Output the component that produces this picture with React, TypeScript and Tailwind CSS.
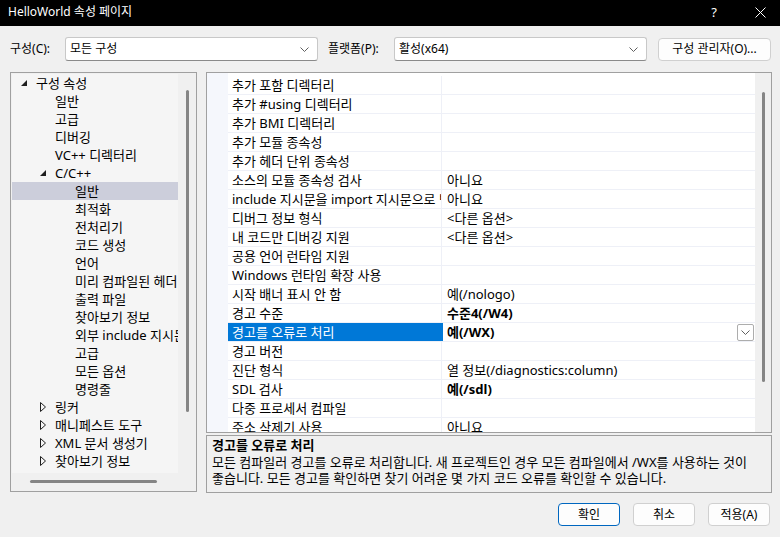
import React from 'react';

type TreeItem = { label: string; level: 0 | 1 | 2; expand?: 'open' | 'closed'; selected?: boolean };

const tree: TreeItem[] = [
  { label: '구성 속성', level: 0, expand: 'open' },
  { label: '일반', level: 1 },
  { label: '고급', level: 1 },
  { label: '디버깅', level: 1 },
  { label: 'VC++ 디렉터리', level: 1 },
  { label: 'C/C++', level: 1, expand: 'open' },
  { label: '일반', level: 2, selected: true },
  { label: '최적화', level: 2 },
  { label: '전처리기', level: 2 },
  { label: '코드 생성', level: 2 },
  { label: '언어', level: 2 },
  { label: '미리 컴파일된 헤더', level: 2 },
  { label: '출력 파일', level: 2 },
  { label: '찾아보기 정보', level: 2 },
  { label: '외부 include 지시문', level: 2 },
  { label: '고급', level: 2 },
  { label: '모든 옵션', level: 2 },
  { label: '명령줄', level: 2 },
  { label: '링커', level: 1, expand: 'closed' },
  { label: '매니페스트 도구', level: 1, expand: 'closed' },
  { label: 'XML 문서 생성기', level: 1, expand: 'closed' },
  { label: '찾아보기 정보', level: 1, expand: 'closed' },
];

type Prop = { name: string; value?: string; bold?: boolean; selected?: boolean };

const props: Prop[] = [
  { name: '추가 포함 디렉터리' },
  { name: '추가 #using 디렉터리' },
  { name: '추가 BMI 디렉터리' },
  { name: '추가 모듈 종속성' },
  { name: '추가 헤더 단위 종속성' },
  { name: '소스의 모듈 종속성 검사', value: '아니요' },
  { name: 'include 지시문을 import 지시문으로 변환', value: '아니요' },
  { name: '디버그 정보 형식', value: '<다른 옵션>' },
  { name: '내 코드만 디버깅 지원', value: '<다른 옵션>' },
  { name: '공용 언어 런타임 지원' },
  { name: 'Windows 런타임 확장 사용' },
  { name: '시작 배너 표시 안 함', value: '예(/nologo)' },
  { name: '경고 수준', value: '수준4(/W4)', bold: true },
  { name: '경고를 오류로 처리', value: '예(/WX)', bold: true, selected: true },
  { name: '경고 버전' },
  { name: '진단 형식', value: '열 정보(/diagnostics:column)' },
  { name: 'SDL 검사', value: '예(/sdl)', bold: true },
  { name: '다중 프로세서 컴파일' },
  { name: '주소 삭제기 사용', value: '아니요' },
];

const levelPad = ['pl-[9px]', 'pl-[28px]', 'pl-[48px]'];

function Chevron() {
  return (
    <svg width="9" height="5" viewBox="0 0 9 5" fill="none">
      <polyline points="0.5,0.5 4.5,4.5 8.5,0.5" stroke="#5f5f5f" strokeWidth="1" />
    </svg>
  );
}

function Arrow({ kind }: { kind?: 'open' | 'closed' }) {
  if (kind === 'open')
    return (
      <svg width="6" height="6" viewBox="0 0 6 6">
        <polygon points="6,0 6,6 0,6" fill="#1e1e1e" />
      </svg>
    );
  if (kind === 'closed')
    return (
      <svg width="6" height="10" viewBox="0 0 6 10">
        <polygon points="0.5,0.5 5.5,5 0.5,9.5" fill="none" stroke="#1e1e1e" strokeWidth="1" />
      </svg>
    );
  return null;
}

function Combo({ text, width }: { text: string; width: string }) {
  return (
    <div className={`${width} h-[24px] bg-white border border-[#c8c8c8] border-b-[#8a8a8a] rounded-[3px] flex items-center pl-[4px] pr-[8px]`}>
      <span className="flex-1">{text}</span>
      <Chevron />
    </div>
  );
}

export default function App() {
  return (
    <div className="w-[780px] h-[537px] bg-[#f0f0f0] flex flex-col overflow-hidden text-[12px] leading-none text-black font-['Noto_Sans','Noto_Sans_CJK_KR',sans-serif]">
      {/* title bar */}
      <div className="h-[26px] bg-black text-white flex items-center pl-[8px] pb-[2px] shrink-0">
        <span className="flex-1">HelloWorld 속성 페이지</span>
        <span className="w-[8px] text-center text-[13px] mr-[37px]">?</span>
        <svg width="11" height="11" viewBox="0 0 11 11" className="mr-[14px]">
          <path d="M0.5 0.5 L10.5 10.5 M10.5 0.5 L0.5 10.5" stroke="#fff" strokeWidth="1" />
        </svg>
      </div>

      {/* toolbar */}
      <div className="h-[46px] flex items-center pl-[10px] shrink-0">
        <span className="w-[55px]">구성(C):</span>
        <Combo text="모든 구성" width="w-[253px]" />
        <span className="ml-[10px] w-[66px]">플랫폼(P):</span>
        <Combo text="활성(x64)" width="w-[253px]" />
        <div className="ml-[11px] w-[113px] h-[23px] bg-[#fdfdfd] border border-[#d0d0d0] rounded-[4px] flex items-center justify-center">
          구성 관리자(O)...
        </div>
      </div>

      {/* main */}
      <div className="flex pl-[10px] text-[13px]">
        {/* tree */}
        <div className="w-[187px] h-[420px] border border-[#a0a0a0] p-px flex flex-col">
          <div className="flex flex-1">
            <div className="w-[166px] h-[399px] bg-[#f5f5f5] overflow-hidden">
              {tree.map((t, i) => (
                <div
                  key={i}
                  className={`h-[18px] flex items-center whitespace-nowrap ${levelPad[t.level]} ${t.selected ? 'bg-[#cccedb]' : ''}`}
                >
                  <div className="w-[15px] shrink-0 flex items-center">
                    <Arrow kind={t.expand} />
                  </div>
                  <span>{t.label}</span>
                </div>
              ))}
            </div>
            <div className="flex-1 flex justify-center pt-[16px]">
              <div className="w-[3px] h-[322px] bg-[#858585] rounded-full ml-px" />
            </div>
          </div>
          <div className="h-[17px] flex items-center pl-[18px]">
            <div className="w-[127px] h-[3px] bg-[#858585] rounded-full" />
          </div>
        </div>

        {/* right column */}
        <div className="ml-[9px] w-[566px] flex flex-col">
          {/* property grid */}
          <div className="h-[361px] border border-[#a0a0a0] bg-white flex overflow-hidden">
            <div className="w-[21px] bg-[#f5f7fc] shrink-0" />
            <div className="w-[527px] pt-[3px] shrink-0">
              {props.map((p, i) => (
                <div key={i} className="h-[19px] flex border-b border-[#eef0f7]">
                  <div
                    className={`w-[213px] shrink-0 pl-[4px] flex items-center whitespace-nowrap overflow-hidden ${p.selected ? 'bg-[#0078d7] text-white' : ''}`}
                  >
                    {p.name}
                  </div>
                  <div className="w-px bg-[#eef0f7] shrink-0" />
                  <div className="flex-1 flex items-center relative pl-[5px]">
                    {p.selected && <div className="absolute left-[-1px] top-0 bottom-0 w-[2px] bg-[#0078d7]" />}
                    <span className={`flex-1 whitespace-nowrap ${p.bold ? 'font-bold' : ''}`}>{p.value ?? ''}</span>
                    {p.selected && (
                      <div className="w-[17px] h-[17px] mr-[1px] bg-white border border-[#adadad] rounded-[2px] flex items-center justify-center">
                        <Chevron />
                      </div>
                    )}
                  </div>
                </div>
              ))}
            </div>
            <div className="flex-1 bg-[#f0f0f0] flex justify-center pt-[19px]">
              <div className="w-[3px] h-[290px] bg-[#858585] rounded-full" />
            </div>
          </div>

          {/* description */}
          <div className="mt-[2px] h-[58px] border border-[#a0a0a0] pl-[5px] pt-px whitespace-nowrap overflow-hidden">
            <div className="h-[17px] leading-[17px] font-bold">경고를 오류로 처리</div>
            <div className="leading-[16px]">
              모든 컴파일러 경고를 오류로 처리합니다. 새 프로젝트인 경우 모든 컴파일에서 /WX를 사용하는 것이
              <br />
              좋습니다. 모든 경고를 확인하면 찾기 어려운 몇 가지 코드 오류를 확인할 수 있습니다.
            </div>
          </div>
        </div>
      </div>

      {/* buttons */}
      <div className="flex justify-end gap-[13px] pr-[10px] mt-[10px]">
        <div className="w-[62px] h-[23px] bg-[#fdfdfd] border border-[#0067c0] rounded-[4px] flex items-center justify-center">확인</div>
        <div className="w-[62px] h-[23px] bg-[#fdfdfd] border border-[#d0d0d0] rounded-[4px] flex items-center justify-center">취소</div>
        <div className="w-[62px] h-[23px] bg-[#fdfdfd] border border-[#d0d0d0] rounded-[4px] flex items-center justify-center">적용(A)</div>
      </div>
    </div>
  );
}
